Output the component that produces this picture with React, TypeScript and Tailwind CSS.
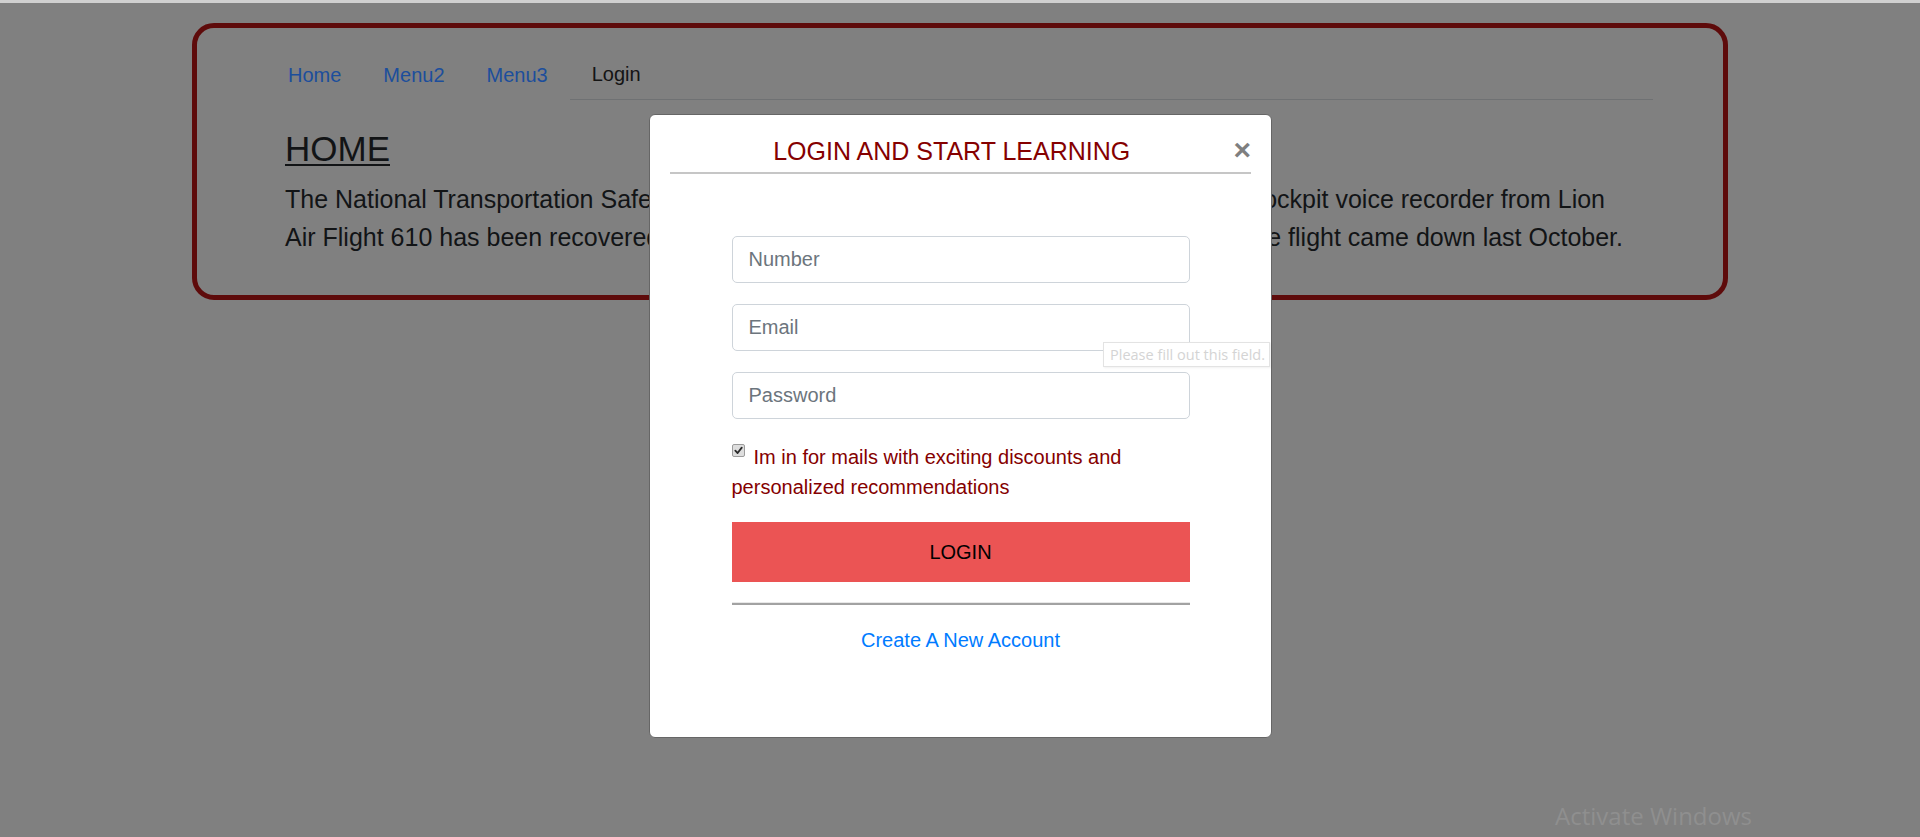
import React, { JSX } from "react";

const navLinks = ["Home", "Menu2", "Menu3"];

const CheckMark = () => (
    <svg width="9" height="9" viewBox="0 0 10 10">
        <path d="M1.5 5.2 L4 7.8 L8.6 1.8" fill="none" stroke="#2b2b2b" strokeWidth="2" strokeLinecap="round" strokeLinejoin="round" />
    </svg>
);

const LoginModal = (): JSX.Element => {
    return (
        <div className="absolute left-[649px] top-[114px] w-[623px] h-[624px] bg-white border border-[#666666] rounded-[6px] px-[20px] pt-[21px]">
            <div className="flex items-start border-b-2 border-[#c6c6c6] pb-[6px]">
                <h5 className="flex-1 text-center text-[25px] leading-[30px] text-[#850000]">
                    LOGIN AND START LEARNING
                </h5>
                <button className="text-[30px] leading-[30px] font-bold text-[#7f7f7f] -mt-[1px]">
                    ×
                </button>
            </div>

            <form className="w-[458px] mx-auto mt-[62px] flex flex-col">
                <input
                    type="text"
                    placeholder="Number"
                    className="h-[47px] border border-[#ced4da] rounded-[5px] px-[16px] text-[20px] text-[#495057] placeholder:text-[#6c757d] outline-none"
                />
                <input
                    type="email"
                    placeholder="Email"
                    className="mt-[21px] h-[47px] border border-[#ced4da] rounded-[5px] px-[16px] text-[20px] text-[#495057] placeholder:text-[#6c757d] outline-none"
                />
                <input
                    type="password"
                    placeholder="Password"
                    className="mt-[21px] h-[47px] border border-[#ced4da] rounded-[5px] px-[16px] text-[20px] text-[#495057] placeholder:text-[#6c757d] outline-none"
                />

                <p className="mt-[23px] text-[20px] leading-[30px] text-[#850000]">
                    <span className="inline-flex items-center justify-center align-top mt-[2px] mr-[9px] w-[13px] h-[13px] bg-[#dedede] border border-[#9c9c9c] rounded-[2px]">
                        <CheckMark />
                    </span>
                    Im in for mails with exciting discounts and personalized recommendations
                </p>

                <button type="button" className="mt-[20px] h-[60px] bg-[#eb5454] text-[20px] text-black">
                    LOGIN
                </button>

                <div className="mt-[20px] h-0 border-t border-t-[#e8e8e8] border-b-2 border-b-[#a2a2a2]" />

                <a className="mt-[20px] text-center text-[20px] leading-[30px] text-[#007bff]">
                    Create A New Account
                </a>
            </form>

            <div className="absolute left-[453px] top-[227px] w-[167px] h-[25px] bg-white border border-[#e3e3e3] shadow-[1px_1px_2px_rgba(0,0,0,0.06)] flex items-center pl-[6px] text-[14.5px] text-[#d4d4d4] font-['Open_Sans',sans-serif] whitespace-nowrap">
                Please fill out this field.
            </div>
        </div>
    );
};

const App: React.FC = (): JSX.Element => {
    return (
        <div className="relative h-[837px] overflow-hidden bg-[#808080] font-['Liberation_Sans',Arial,sans-serif]">
            <div className="h-[3px] bg-[#d0d0d0]" />

            <div className="mx-auto mt-[20px] w-[1536px] border-[5px] border-[#5e0b0b] rounded-[22px] pt-[21px] pb-[39px] pl-[71px] pr-[70px]">
                <nav className="flex items-end text-[20px] leading-[30px]">
                    {navLinks.map((link) => (
                        <a key={link} className="px-[20px] py-[10px] mr-[2px] text-[#1c4e9c]">
                            {link}
                        </a>
                    ))}
                    <div className="flex-1 border-b border-[#6f7173]">
                        <a className="inline-block ml-[2px] px-[20px] py-[10px] text-[#141414]">Login</a>
                    </div>
                </nav>

                <div className="pl-[17px] text-[#121416]">
                    <h3 className="mt-[28px] text-[35px] leading-[42px] underline underline-offset-[3px] decoration-[2px]">
                        HOME
                    </h3>
                    <div className="mt-[11px] text-[25px] leading-[37.5px] whitespace-nowrap">
                        <div className="flex justify-between w-[1320px]">
                            <span>The National Transportation Safety Board says the</span>
                            <span>cockpit voice recorder from Lion</span>
                        </div>
                        <div className="flex justify-between w-[1338px]">
                            <span>Air Flight 610 has been recovered from the sea, months after</span>
                            <span>the flight came down last October.</span>
                        </div>
                    </div>
                </div>
            </div>

            <LoginModal />

            <div className="absolute right-[168px] bottom-[3px] text-[24px] text-[#8f8f8f] font-['Open_Sans',sans-serif]">
                Activate Windows
            </div>
        </div>
    );
};

export default App;
